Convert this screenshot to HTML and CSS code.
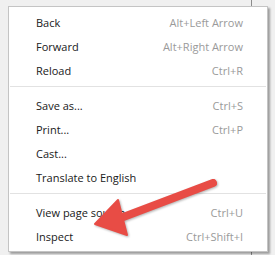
FILE: index.html
```html
<!doctype html>
<html lang="en">
<head>
  <meta charset="UTF-8">
  <title>Context menu</title>
  <link rel="stylesheet" href="styles.css">
</head>
<body>
<div class="desk">
  <div class="rule"></div>
  <ul class="menu">
    <li class="item"><span>Back</span><span class="key">Alt+Left Arrow</span></li>
    <li class="item"><span>Forward</span><span class="key">Alt+Right Arrow</span></li>
    <li class="item"><span>Reload</span><span class="key">Ctrl+R</span></li>
    <li class="sep"></li>
    <li class="item"><span>Save as...</span><span class="key">Ctrl+S</span></li>
    <li class="item"><span>Print...</span><span class="key">Ctrl+P</span></li>
    <li class="item"><span>Cast...</span></li>
    <li class="item"><span>Translate to English</span></li>
    <li class="sep"></li>
    <li class="item"><span>View page source</span><span class="key">Ctrl+U</span></li>
    <li class="item"><span>Inspect</span><span class="key">Ctrl+Shift+I</span></li>
  </ul>
  <svg class="arrow" width="275" height="255" viewBox="0 0 275 255">
    <g fill="#e84c45" stroke="#e84c45" stroke-linejoin="round">
      <line x1="213" y1="183" x2="118" y2="219" stroke-width="8" stroke-linecap="round"/>
      <polygon points="95,224 118,200 127,235" stroke-width="2"/>
    </g>
  </svg>
</div>
</body>
</html>
```

FILE: styles.css
```css
html, body {
  margin: 0;
  padding: 0;
}

body {
  background: #f0f0f0;
  font-family: "Open Sans", "Noto Sans", sans-serif;
  font-size: 11px;
}

.desk {
  position: relative;
  width: 275px;
  height: 255px;
  overflow: hidden;
  padding: 6px 0 0 8px;
  box-sizing: border-box;
}

.rule {
  position: absolute;
  left: 251px;
  top: 0;
  width: 1px;
  height: 255px;
  background: #8c8c8c;
}

.menu {
  position: relative;
  list-style: none;
  margin: 0;
  padding: 3px 0 0;
  width: 258px;
  height: 241px;
  box-sizing: content-box;
  background: #fff;
  border: 1px solid #c4c4c4;
  box-shadow: 2px 2px 2px rgba(0, 0, 0, 0.35);
}

.item {
  display: flex;
  justify-content: space-between;
  align-items: center;
  height: 24px;
  padding: 0 24px 0 27px;
  color: #202020;
}

.key {
  color: #9a9a9a;
}

.sep {
  height: 1px;
  margin: 4px 1px 6px 1px;
  background: #e2e2e2;
}

.arrow {
  position: absolute;
  left: 0;
  top: 0;
  filter: drop-shadow(1px 1px 1px rgba(0, 0, 0, 0.3));
}
```
